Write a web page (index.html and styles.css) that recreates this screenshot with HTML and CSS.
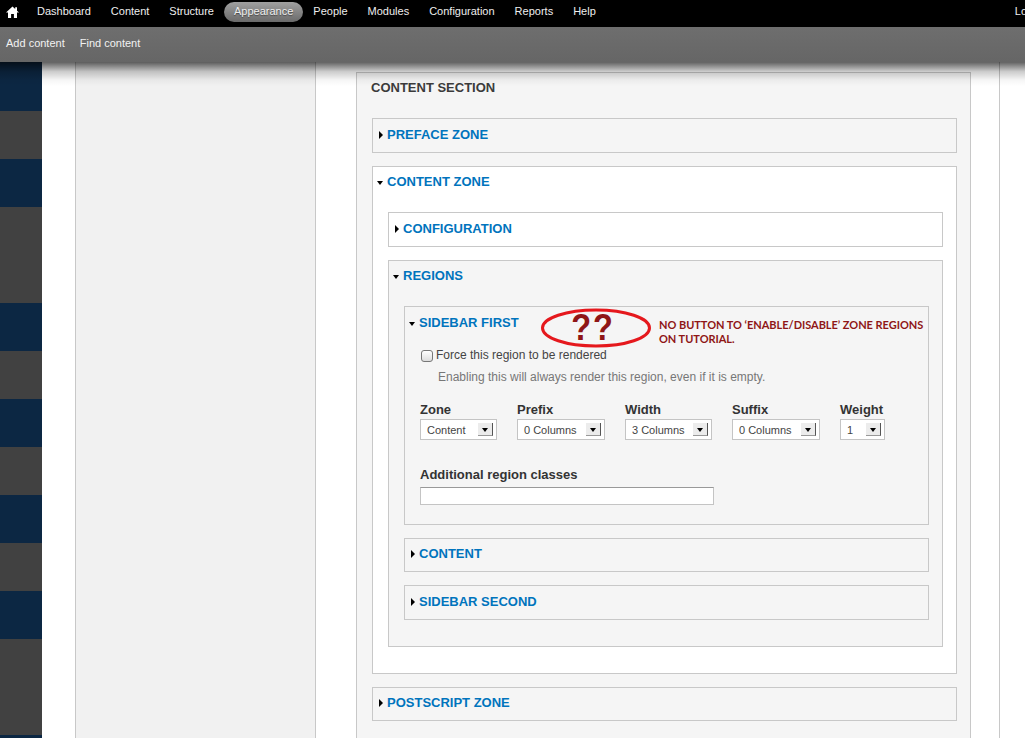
FILE: index.html
```html
<!DOCTYPE html>
<html lang="en">
<head>
  <meta charset="UTF-8">
  <title>Zone regions</title>
  <link rel="stylesheet" href="styles.css">
</head>
<body>
  <div class="toolbar">
    <div class="menu">
      <a class="home" href="#">
        <svg width="13" height="12" viewBox="0 0 13 12"><path d="M6.5 .5 L9.2 3 V1.2 H11 V4.7 L13 6.6 H11 V12 H7.9 V8 H5.1 V12 H2 V6.6 H0 Z" fill="#fff"/></svg>
      </a>
      <a href="#">Dashboard</a>
      <a href="#">Content</a>
      <a href="#">Structure</a>
      <a class="active" href="#">Appearance</a>
      <a href="#">People</a>
      <a href="#">Modules</a>
      <a href="#">Configuration</a>
      <a href="#">Reports</a>
      <a href="#">Help</a>
      <a class="logout" href="#">Log out</a>
    </div>
    <div class="shortcuts">
      <a href="#">Add content</a>
      <a href="#">Find content</a>
    </div>
  </div>

  <div class="page">
    <div class="stripes">
      <div class="stripe blue first"></div>
      <div class="stripe gray"></div>
      <div class="stripe blue"></div>
      <div class="stripe gray tall"></div>
      <div class="stripe blue"></div>
      <div class="stripe gray"></div>
      <div class="stripe blue"></div>
      <div class="stripe gray"></div>
      <div class="stripe blue"></div>
      <div class="stripe gray"></div>
      <div class="stripe blue"></div>
      <div class="stripe gray tall"></div>
      <div class="stripe blue"></div>
    </div>

    <div class="sidebar"></div>

    <div class="main">
      <div class="section">
        <h2>CONTENT SECTION</h2>

        <div class="box closed"><a class="legend" href="#"><i class="arrow-right"></i>PREFACE ZONE</a></div>

        <div class="box white open">
          <a class="legend" href="#"><i class="arrow-down"></i>CONTENT ZONE</a>
          <div class="box-body">
            <div class="box closed white"><a class="legend" href="#"><i class="arrow-right"></i>CONFIGURATION</a></div>

            <div class="box regions open">
              <a class="legend" href="#"><i class="arrow-down"></i>REGIONS</a>
              <div class="box-body">
                <div class="box first-region">
                  <a class="legend" href="#"><i class="arrow-down"></i>SIDEBAR FIRST</a>

                  <div class="note">
                    <div class="bubble">
                      <svg width="112" height="42" viewBox="0 0 112 42"><ellipse cx="56" cy="21" rx="53.5" ry="18" fill="none" stroke="#e5181d" stroke-width="3"/></svg>
                      <span>??</span>
                    </div>
                    <p>NO BUTTON TO ‘ENABLE/DISABLE’ ZONE REGIONS ON TUTORIAL.</p>
                  </div>

                  <div class="region-body">
                    <label class="check"><input type="checkbox">Force this region to be rendered</label>
                    <p class="hint">Enabling this will always render this region, even if it is empty.</p>

                    <div class="fields">
                      <div class="field zone">
                        <label>Zone</label>
                        <div class="select"><span>Content</span><b></b></div>
                      </div>
                      <div class="field prefix">
                        <label>Prefix</label>
                        <div class="select"><span>0 Columns</span><b></b></div>
                      </div>
                      <div class="field width">
                        <label>Width</label>
                        <div class="select"><span>3 Columns</span><b></b></div>
                      </div>
                      <div class="field suffix">
                        <label>Suffix</label>
                        <div class="select"><span>0 Columns</span><b></b></div>
                      </div>
                      <div class="field weight">
                        <label>Weight</label>
                        <div class="select"><span>1</span><b></b></div>
                      </div>
                    </div>

                    <label class="text-label">Additional region classes</label>
                    <input class="text-input" type="text">
                  </div>
                </div>

                <div class="box closed tight"><a class="legend" href="#"><i class="arrow-right"></i>CONTENT</a></div>
                <div class="box closed"><a class="legend" href="#"><i class="arrow-right"></i>SIDEBAR SECOND</a></div>
              </div>
            </div>
          </div>
        </div>

        <div class="box closed tight"><a class="legend" href="#"><i class="arrow-right"></i>POSTSCRIPT ZONE</a></div>
      </div>
    </div>
  </div>
</body>
</html>
```

FILE: styles.css
```css
* {
  box-sizing: border-box;
}
html, body {
  margin: 0;
  height: 100%;
  overflow: hidden;
}
body {
  background: #fff;
  font-family: "Liberation Sans", Arial, sans-serif;
  font-size: 12px;
  color: #333;
}
a {
  text-decoration: none;
}

/* admin toolbar */
.toolbar {
  position: absolute;
  top: 0;
  left: 0;
  width: 100%;
  z-index: 5;
}
.toolbar::after {
  content: "";
  position: absolute;
  top: 100%;
  left: 0;
  right: 0;
  height: 24px;
  background: linear-gradient(rgba(0, 0, 0, 0.62), rgba(0, 0, 0, 0.2) 40%, rgba(0, 0, 0, 0.04) 75%, transparent);
}
.menu {
  display: flex;
  height: 27px;
  padding-top: 2px;
  background: #000;
  overflow: hidden;
  white-space: nowrap;
}
.menu a {
  height: 20px;
  color: #eee;
  font-size: 11px;
  line-height: 18px;
  padding: 0 10px;
  flex: none;
}
.menu .home {
  display: flex;
  align-items: center;
  width: 27px;
  padding: 0 0 0 6px;
}
.menu .active {
  background: linear-gradient(#a0a0a0, #6a6a6a);
  border-radius: 10px;
  text-shadow: 0 1px 1px #444;
}
.menu .logout {
  margin-left: 399px;
}
.shortcuts {
  display: flex;
  gap: 15px;
  align-items: center;
  height: 35px;
  padding: 0 6px 3px;
  background: linear-gradient(#6e6e6e, #666);
}
.shortcuts a {
  color: #f2f2f2;
  font-size: 11px;
}

/* page columns */
.page {
  display: flex;
  height: 100%;
}
.stripes {
  width: 42px;
  flex: none;
}
.stripe {
  height: 48px;
}
.stripe.first {
  height: 111px;
}
.stripe.tall {
  height: 96px;
}
.blue {
  background: #0c2743;
}
.gray {
  background: #414141;
}
.sidebar {
  width: 241px;
  flex: none;
  margin-left: 33px;
  background: #f1f1f1;
  border-left: 1px solid #c8c8c8;
  border-right: 1px solid #c8c8c8;
}
.main {
  width: 684px;
  flex: none;
  padding: 72px 28px 0 40px;
  border-right: 1px solid #c8c8c8;
}

/* fieldsets */
.section {
  background: #f5f5f5;
  border: 1px solid #c8c8c8;
  padding: 0 13px 30px 15px;
}
.section h2 {
  margin: 0 0 0 -1px;
  padding-top: 7px;
  height: 45px;
  font-size: 13px;
  line-height: 15px;
  font-weight: bold;
  color: #3b3b3b;
}
.box {
  position: relative;
  border: 1px solid #c8c8c8;
  margin-bottom: 13px;
}
.box.white {
  background: #fff;
}
.box.closed {
  height: 35px;
}
.box.closed.tight {
  height: 34px;
}
.legend {
  display: block;
  padding-left: 14px;
  padding-top: 8px;
  height: 33px;
  color: #0074bd;
  font-size: 13px;
  line-height: 15px;
  font-weight: bold;
}
.box.open > .legend, .box.tight > .legend {
  padding-top: 7px;
  height: 32px;
}
.arrow-right, .arrow-down {
  display: inline-block;
  width: 0;
  height: 0;
  border-style: solid;
  border-color: transparent;
}
.arrow-right {
  margin: 0 4px 0 -8px;
  border-width: 4px 0 4px 4px;
  border-left-color: #000;
}
.arrow-down {
  margin: 0 4px 1px -10px;
  border-width: 4px 3px 0;
  border-top-color: #000;
}
.box-body {
  padding: 13px 13px 0 15px;
}
.regions {
  background: #f5f5f5;
  height: 387px;
  margin-bottom: 26px;
}
.box.first-region {
  height: 219px;
}

/* annotation pasted over the form */
.note {
  position: absolute;
  left: 135px;
  top: 0;
  display: flex;
  gap: 7px;
}
.bubble {
  position: relative;
  width: 112px;
  height: 42px;
}
.bubble svg {
  display: block;
}
.bubble span {
  position: absolute;
  left: 0;
  right: 6px;
  top: -1px;
  text-align: center;
  font-size: 37px;
  line-height: 44px;
  font-weight: bold;
  color: #8f1616;
  letter-spacing: 2px;
  transform: scaleX(0.88);
}
.note p {
  margin: 11px 0 0;
  width: 270px;
  font-family: Lato, sans-serif;
  font-size: 11px;
  line-height: 14px;
  font-weight: bold;
  color: #8f1616;
  letter-spacing: -0.03px;
}

/* region form */
.region-body {
  padding: 0 15px;
}
.check {
  display: flex;
  align-items: center;
  gap: 3px;
  color: #444;
  font-size: 12px;
  line-height: 14px;
  margin-top: 8px;
}
.check input {
  appearance: none;
  width: 12px;
  height: 12px;
  margin: 2px 0 0 1px;
  border: 1px solid #777;
  border-radius: 3px;
  background: linear-gradient(#fff, #ddd);
}
.hint {
  margin: 8px 0 0 18px;
  font-size: 12px;
  line-height: 14px;
  color: #777;
}
.fields {
  display: flex;
  gap: 20px;
  margin-top: 18px;
}
.field label, .text-label {
  display: block;
  font-size: 13px;
  line-height: 15px;
  font-weight: bold;
  color: #333;
}
.field.zone { width: 77px; }
.field.prefix { width: 88px; }
.field.width { width: 87px; }
.field.suffix { width: 88px; }
.field.weight { width: 45px; }
.select {
  display: flex;
  justify-content: space-between;
  align-items: center;
  height: 21px;
  margin-top: 2px;
  padding: 0 3px 0 6px;
  background: #fff;
  border: 1px solid #c4c4c4;
  font-size: 11px;
  color: #444;
}
.select b {
  position: relative;
  width: 15px;
  height: 13px;
  background: #ececec;
  border-right: 1px solid #555;
  border-bottom: 1px solid #999;
}
.select b::after {
  content: "";
  position: absolute;
  left: 4px;
  top: 5px;
  border-style: solid;
  border-width: 4px 3px 0;
  border-color: #000 transparent transparent;
}
.text-label {
  margin-top: 27px;
}
.text-input {
  display: block;
  width: 294px;
  height: 18px;
  margin-top: 5px;
  border: 1px solid #c4c4c4;
  border-top-color: #999;
  background: #fff;
}
```
